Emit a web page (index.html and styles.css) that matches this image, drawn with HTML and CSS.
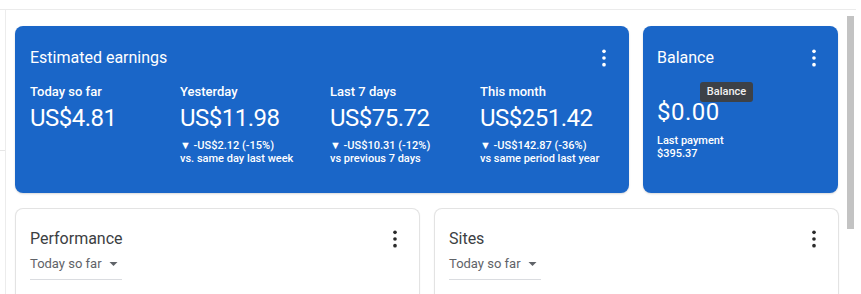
FILE: index.html
```html
<!DOCTYPE html>
<html>
<head>
<meta charset="utf-8">
<link rel="stylesheet" href="styles.css">
</head>
<body>
<div class="topline"></div>
<div class="frame">
  <div class="rail"><div class="rail-tick"></div></div>
  <div class="main">
    <div class="row">
      <section class="card blue earnings">
        <div class="head">
          <h2 class="title">Estimated earnings</h2>
          <svg class="kebab" viewBox="0 0 24 24"><circle cx="12" cy="4" r="2.2"/><circle cx="12" cy="12" r="2.2"/><circle cx="12" cy="20" r="2.2"/></svg>
        </div>
        <div class="cols">
          <div class="col">
            <div class="label">Today so far</div>
            <div class="value">US$4.81</div>
          </div>
          <div class="col">
            <div class="label">Yesterday</div>
            <div class="value">US$11.98</div>
            <div class="small change">▼ -US$2.12 (-15%)</div>
            <div class="small">vs. same day last week</div>
          </div>
          <div class="col">
            <div class="label">Last 7 days</div>
            <div class="value">US$75.72</div>
            <div class="small change">▼ -US$10.31 (-12%)</div>
            <div class="small">vs previous 7 days</div>
          </div>
          <div class="col">
            <div class="label">This month</div>
            <div class="value">US$251.42</div>
            <div class="small change">▼ -US$142.87 (-36%)</div>
            <div class="small">vs same period last year</div>
          </div>
        </div>
      </section>
      <section class="card blue balance">
        <div class="head">
          <h2 class="title">Balance</h2>
          <svg class="kebab" viewBox="0 0 24 24"><circle cx="12" cy="4" r="2.2"/><circle cx="12" cy="12" r="2.2"/><circle cx="12" cy="20" r="2.2"/></svg>
        </div>
        <div class="value bal-value">$0.00</div>
        <div class="small change bal-sub">Last payment</div>
        <div class="small">$395.37</div>
        <div class="tooltip">Balance</div>
      </section>
    </div>
    <div class="row row2">
      <section class="card white">
        <div class="head">
          <h2 class="title dark">Performance</h2>
          <svg class="kebab darkicon" viewBox="0 0 24 24"><circle cx="12" cy="4" r="2.2"/><circle cx="12" cy="12" r="2.2"/><circle cx="12" cy="20" r="2.2"/></svg>
        </div>
        <div class="dropdown"><span>Today so far</span><svg class="caret" viewBox="0 0 10 5"><path d="M0 0h10L5 5z"/></svg></div>
      </section>
      <section class="card white">
        <div class="head">
          <h2 class="title dark">Sites</h2>
          <svg class="kebab darkicon" viewBox="0 0 24 24"><circle cx="12" cy="4" r="2.2"/><circle cx="12" cy="12" r="2.2"/><circle cx="12" cy="20" r="2.2"/></svg>
        </div>
        <div class="dropdown"><span>Today so far</span><svg class="caret" viewBox="0 0 10 5"><path d="M0 0h10L5 5z"/></svg></div>
      </section>
    </div>
  </div>
  <div class="scroll"></div>
</div>
</body>
</html>
```
FILE: styles.css
```css
html, body {
  margin: 0;
  padding: 0;
  background: #ffffff;
  font-family: Roboto, "Liberation Sans", Arial, sans-serif;
  overflow: hidden;
  height: 294px;
}
.topline {
  width: 856px;
  height: 9px;
  border-bottom: 1px solid #ebebeb;
}
.frame {
  display: flex;
  align-items: flex-start;
  height: 284px;
  overflow: hidden;
}
.rail {
  width: 5px;
  height: 284px;
  border-right: 1px solid #ececec;
  flex-shrink: 0;
}
.rail-tick {
  margin-top: 130px;
  height: 10px;
  border-bottom: 1px solid #e6e6e6;
  width: 5px;
}
.main {
  padding: 16px 0 0 9px;
  width: 824px;
  flex-shrink: 0;
}
.row {
  display: flex;
  gap: 14px;
}
.row2 {
  margin-top: 15px;
}
.card {
  position: relative;
  box-sizing: border-box;
  border-radius: 8px;
  flex-shrink: 0;
}
.blue {
  background: #1a66c8;
  color: #ffffff;
  height: 167px;
  padding: 22px 15px 0 15px;
  box-shadow: 0 1px 2px rgba(0,0,0,0.15);
}
.earnings { width: 614px; }
.balance { width: 195px; padding-left: 14px; padding-right: 14px; }
.white {
  width: 405px;
  height: 86px;
  background: #fff;
  border: 1px solid #e3e3e3;
  border-bottom: none;
  border-radius: 8px 8px 0 0;
  padding: 20px 14px 0 14px;
  box-shadow: 0 1px 2px rgba(0,0,0,0.06);
}
.head {
  display: flex;
  justify-content: space-between;
  align-items: center;
  height: 20px;
}
.title {
  margin: 0;
  font-size: 16px;
  line-height: 20px;
  font-weight: 400;
}
.title.dark { color: #3c4043; }
.kebab {
  width: 20px;
  height: 20px;
  fill: #ffffff;
}
.darkicon { fill: #2a2a2a; }
.cols {
  display: flex;
  margin-top: 16px;
}
.col { width: 150px; flex-shrink: 0; }
.label {
  font-size: 13px;
  line-height: 16px;
  font-weight: 500;
}
.value {
  font-size: 24px;
  line-height: 28px;
  margin-top: 4px;
  letter-spacing: -0.5px;
}
.small {
  font-size: 11px;
  line-height: 13px;
  font-weight: 500;
}
.change { margin-top: 7px; }
.bal-value { margin-top: 30px; letter-spacing: 0.5px; }
.bal-sub { margin-top: 8px; }
.tooltip {
  position: absolute;
  left: 57px;
  top: 56px;
  width: 53px;
  height: 20px;
  box-sizing: border-box;
  background: #3d4147;
  color: #f1f1f1;
  border-radius: 3px;
  font-size: 11px;
  font-weight: 500;
  line-height: 20px;
  text-align: center;
}
.dropdown {
  display: inline-flex;
  align-items: center;
  margin-top: 7px;
  width: 92px;
  padding-bottom: 7px;
  border-bottom: 1px solid #dadce0;
  font-size: 13px;
  line-height: 16px;
  color: #5f6368;
}
.caret {
  width: 9px;
  height: 4px;
  margin-left: 7px;
  fill: #5f6368;
}
.scroll {
  margin-left: 8px;
  margin-top: 6px;
  width: 7px;
  height: 213px;
  background: #c3c3c3;
  flex-shrink: 0;
}
```
